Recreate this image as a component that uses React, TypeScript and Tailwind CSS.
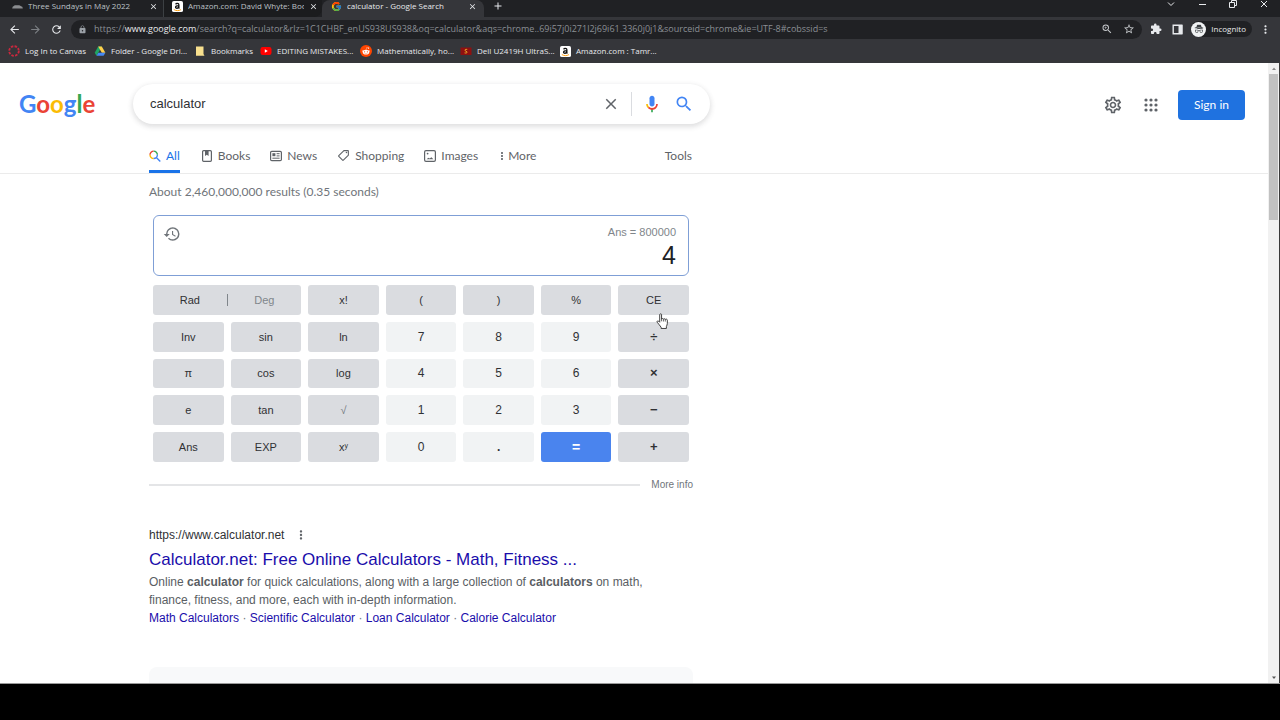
import type { ReactNode } from "react";
import { BsIncognito } from "react-icons/bs";
import { FaRedditAlien } from "react-icons/fa";
import { FcGoogle } from "react-icons/fc";
import {
  MdAdd,
  MdArrowBack,
  MdArrowForward,
  MdClose,
  MdExtension,
  MdHistory,
  MdLock,
  MdMoreVert,
  MdOutlineLocalOffer,
  MdOutlineSettings,
  MdRefresh,
  MdSearch,
  MdStarBorder,
  MdZoomIn,
} from "react-icons/md";

function AmazonIcon() {
  return (
    <svg viewBox="0 0 12 12" className="size-[11px] shrink-0" aria-hidden="true">
      <rect width="12" height="12" rx="2" fill="#fff" />
      <path
        d="M4 3.6C4.3 2.4 7.5 2.2 7.5 4v3.2c0 .5.3.7.6 1M7.4 5C5.400 5 3.900 5.300 3.900 6.700c0 1.700 2.900 1.600 3.500-.2"
        fill="none"
        stroke="#111"
        strokeWidth="1.400"
      />
      <path d="M2 9.300c2.400 1.600 5.400 1.600 7.800.1" fill="none" stroke="#f90" strokeWidth="1" />
    </svg>
  );
}

function CarIcon() {
  return (
    <svg viewBox="0 0 12 12" className="size-[11px] shrink-0" aria-hidden="true">
      <path d="M.5 6.500 3 4.500h5l3.500 2v1.800H.5z" fill="#8b8d90" />
      <path d="M.5 7.800h11v1H.5z" fill="#55575a" />
    </svg>
  );
}

function CanvasIcon() {
  return (
    <svg viewBox="0 0 12 12" className="size-3 shrink-0" aria-hidden="true">
      <circle cx="6" cy="6" r="4.800" fill="none" stroke="#c9283e" strokeWidth="1.800" strokeDasharray="2.500 1.270" />
    </svg>
  );
}

function DriveIcon() {
  return (
    <svg viewBox="0 0 12 12" className="size-3 shrink-0" aria-hidden="true">
      <path d="M4.200 1.500h3.600L6 4.700 2.500 10.800.7 7.700z" fill="#1fa463" />
      <path d="M4.200 1.500h3.600l3.600 6.200H7.800z" fill="#ffd04b" />
      <path d="M4.300 7.700h7.100l-1.800 3.100H2.500z" fill="#4688f4" />
    </svg>
  );
}

function NoteIcon() {
  return (
    <svg viewBox="0 0 12 12" className="size-3 shrink-0" aria-hidden="true">
      <path d="M2 1.500h7.500v7.500l1 1.800H2z" fill="#f8e08e" />
    </svg>
  );
}

function YouTubeIcon() {
  return (
    <svg viewBox="0 0 12 12" className="size-3 shrink-0" aria-hidden="true">
      <rect x=".5" y="2" width="11" height="8" rx="2.200" fill="#f00" />
      <path d="M4.800 4.200v3.600L7.800 6z" fill="#fff" />
    </svg>
  );
}

function RedditIcon() {
  return (
    <span className="flex size-3 shrink-0 items-center justify-center rounded-full bg-[#ff4500] text-white">
      <FaRedditAlien className="size-2" />
    </span>
  );
}

function RedSiteIcon() {
  return (
    <svg viewBox="0 0 12 12" className="size-3 shrink-0" aria-hidden="true">
      <rect x=".5" y="2.500" width="11" height="7.500" fill="#8f1010" />
      <path d="M7.200 4.500c-2.400-.6-3 1-1.400 1.600 2 .6 1.600 2.400-1.200 1.800" fill="none" stroke="#f0b429" strokeWidth="1" />
    </svg>
  );
}

function MicIcon() {
  return (
    <svg viewBox="0 0 24 24" className="size-5" aria-hidden="true">
      <path fill="#4285f4" d="m12 15c1.660 0 3-1.310 3-2.970v-7.020c0-1.660-1.340-3.010-3-3.010s-3 1.340-3 3.010v7.020c0 1.660 1.340 2.970 3 2.970z" />
      <path fill="#34a853" d="m11 18.080h2v3.920h-2z" />
      <path fill="#fbbc05" d="m7.050 16.870c-1.270-1.330-2.050-2.830-2.050-4.870h2c0 1.450.56 2.420 1.470 3.380v.32l-1.150 1.180z" />
      <path fill="#ea4335" d="m12 16.930a4.970 5.250 0 0 1-3.540-1.550l-1.410 1.490c1.260 1.340 3.020 2.130 4.950 2.130 3.870 0 6.990-2.920 6.990-7h-1.990c0 2.920-2.240 4.930-5 4.930z" />
    </svg>
  );
}

function ColorSearchIcon() {
  return (
    <svg viewBox="0 0 12 12" className="size-3" fill="none" strokeWidth="1.400" aria-hidden="true">
      <path d="M1 4.800A3.700 3.700 0 0 1 4.700 1.100" stroke="#ea4335" />
      <path d="M4.700 1.100A3.700 3.700 0 0 1 8.400 4.800" stroke="#34a853" />
      <path d="M1 4.800A3.700 3.700 0 0 0 4.700 8.500" stroke="#fbbc05" />
      <path d="M8.400 4.800A3.700 3.700 0 0 1 4.700 8.500M7.300 7.400 11.300 11.400" stroke="#4285f4" />
    </svg>
  );
}

function BookIcon() {
  return (
    <svg viewBox="0 0 12 12" className="size-3" fill="none" aria-hidden="true">
      <rect x="1.600" y=".7" width="8.800" height="10.600" rx="1" stroke="#5f6368" strokeWidth="1.200" />
      <path d="M4 1h3.600v5L5.800 4.800 4 6z" fill="#5f6368" />
    </svg>
  );
}

function NewsIcon() {
  return (
    <svg viewBox="0 0 12 12" className="size-3" fill="none" stroke="#5f6368" aria-hidden="true">
      <rect x=".6" y="1.400" width="10.800" height="9.200" rx="1.200" strokeWidth="1.200" />
      <path d="M2.400 3.200h3v3h-3z" fill="#5f6368" stroke="none" />
      <path d="M6.600 3.700h3M6.600 5.900h3M2.400 8.200h7.200" strokeWidth="1" />
    </svg>
  );
}

function ImagesIcon() {
  return (
    <svg viewBox="0 0 12 12" className="size-3" fill="none" aria-hidden="true">
      <rect x=".6" y=".6" width="10.800" height="10.800" rx="1.400" stroke="#5f6368" strokeWidth="1.200" />
      <path d="M2.600 9.200 4.400 7.800l1.300.8L7.400 7.200 9.400 9.200z" fill="#5f6368" />
      <circle cx="3.600" cy="3.600" r=".9" fill="#5f6368" />
    </svg>
  );
}

function AppsIcon() {
  return (
    <svg viewBox="0 0 14 14" className="size-[14px]" fill="#5f6368" aria-hidden="true">
      {[2, 7, 12].map((y) => [2, 7, 12].map((x) => <circle key={`${x}-${y}`} cx={x} cy={y} r="1.600" />))}
    </svg>
  );
}

function HandCursor() {
  return (
    <svg viewBox="0 0 14 18" className="pointer-events-none absolute top-[28px] left-[38px] z-10 h-[17px] w-[13px]" aria-hidden="true">
      <path
        d="M4 1.500c0-1 2-1 2 0v5c0-1 2-1 2 .2 0-1 2-.9 2 .3 0-.9 2.200-.9 2.200.6v3.600c0 1.400-.7 2-1 3.200V16.500H5.500v-1.300C4.500 13.500 2.500 11.500 1.300 9.800c-.7-1.200.7-2 1.600-1.100L4 9.800z"
        fill="#fff"
        stroke="#333"
        strokeWidth="1"
      />
      <path d="M6 6.500v2.300M8 7v2M10 7.200v1.900" stroke="#333" strokeWidth=".8" />
    </svg>
  );
}

function Tab({ icon, title, className }: { icon: ReactNode; title: string; className: string }) {
  return (
    <div className={`flex h-full items-start ${className}`}>
      <div className="flex h-3 min-w-0 flex-1 items-center gap-[5px]">
        {icon}
        <span className="min-w-0 flex-1 overflow-hidden whitespace-nowrap">{title}</span>
        <button aria-label={`Close ${title}`} className="text-[#e8eaed]">
          <MdClose className="size-[9px]" />
        </button>
      </div>
    </div>
  );
}

const bookmarks = [
  { label: "Log In to Canvas", icon: <CanvasIcon />, width: "w-[86px]" },
  { label: "Folder - Google Dri...", icon: <DriveIcon />, width: "w-[100px]" },
  { label: "Bookmarks", icon: <NoteIcon />, width: "w-[66px]" },
  { label: "EDITING MISTAKES...", icon: <YouTubeIcon />, width: "w-[100px]" },
  { label: "Mathematically, ho...", icon: <RedditIcon />, width: "w-[100px]" },
  { label: "Dell U2419H UltraS...", icon: <RedSiteIcon />, width: "w-[100px]" },
  { label: "Amazon.com : Tamr...", icon: <AmazonIcon />, width: "w-[100px]" },
];

function BrowserChrome() {
  return (
    <header className="shrink-0 bg-[#35363a] font-['Open_Sans','Noto_Sans',sans-serif] text-[8px] text-[#e8eaed]">
      <div className="flex h-[17px] items-start bg-[#202124] leading-3 text-[#bdc1c6]">
        <Tab icon={<CarIcon />} title="Three Sundays in May 2022" className="w-[164px] border-r border-[#3c4043] pr-[5px] pl-3" />
        <Tab icon={<AmazonIcon />} title="Amazon.com: David Whyte: Boo" className="w-[158px] rounded-br-lg bg-[#1b1c1e] pr-1 pl-2" />
        <Tab icon={<FcGoogle className="size-[11px]" />} title="calculator - Google Search" className="w-[162px] rounded-t-lg bg-[#35363a] pr-[7px] pl-[9px] text-[#e8eaed]" />
        <button aria-label="New tab" className="ml-2 flex h-3 items-center text-[#e8eaed]">
          <MdAdd className="size-3" />
        </button>
        <div className="ml-auto flex h-2 items-center gap-[21px] pr-[11px] text-[#e8eaed]">
          <button aria-label="Search tabs">
            <svg viewBox="0 0 10 10" className="size-[10px]" fill="none" stroke="currentColor" aria-hidden="true">
              <path d="M2 3.500l3 3 3-3" />
            </svg>
          </button>
          <button aria-label="Minimize">
            <svg viewBox="0 0 10 10" className="size-[10px]" fill="none" stroke="currentColor" aria-hidden="true">
              <path d="M2 5.500h7" />
            </svg>
          </button>
          <button aria-label="Restore">
            <svg viewBox="0 0 10 10" className="size-[10px]" fill="none" stroke="currentColor" aria-hidden="true">
              <path d="M1.500 3.500h5v5h-5zM3.500 3V1.500h5v5H7" />
            </svg>
          </button>
          <button aria-label="Close window">
            <svg viewBox="0 0 10 10" className="size-[10px]" fill="none" stroke="currentColor" aria-hidden="true">
              <path d="M2 2l6 6M8 2 2 8" />
            </svg>
          </button>
        </div>
      </div>

      <div className="flex h-6 items-center pl-2">
        <div className="flex items-center gap-2">
          <button aria-label="Back">
            <MdArrowBack className="size-[13px]" />
          </button>
          <button aria-label="Forward" className="text-[#7d8084]">
            <MdArrowForward className="size-[13px]" />
          </button>
          <button aria-label="Reload">
            <MdRefresh className="size-[13px]" />
          </button>
        </div>
        <div className="ml-2 flex h-[19px] min-w-0 flex-1 items-center rounded-full bg-[#202124] px-[7px]">
          <MdLock className="size-[9px] shrink-0 text-[#9aa0a6]" />
          <div
            role="textbox"
            aria-label="Address"
            contentEditable
            suppressContentEditableWarning
            className="ml-[7px] min-w-0 flex-1 overflow-hidden text-[9px] leading-4 whitespace-nowrap text-[#8b8f94] outline-none"
          >
            https://<span className="text-[#e8eaed]">www.google.com</span>
            /search?q=calculator&amp;rlz=1C1CHBF_enUS938US938&amp;oq=calculator&amp;aqs=chrome..69i57j0i271l2j69i61.3360j0j1&amp;sourceid=chrome&amp;ie=UTF-8#cobssid=s
          </div>
          <div className="flex items-center gap-[10px] text-[#c4c7ca]">
            <button aria-label="Zoom">
              <MdZoomIn className="size-3" />
            </button>
            <button aria-label="Bookmark this page">
              <MdStarBorder className="size-3" />
            </button>
          </div>
        </div>
        <div className="flex items-center pr-2 pl-2">
          <button aria-label="Extensions">
            <MdExtension className="size-3" />
          </button>
          <button aria-label="Side panel" className="ml-[10px]">
            <svg viewBox="0 0 11 11" className="size-[11px]" aria-hidden="true">
              <path d="M1.200 1.200h8.600v8.600H1.200z" fill="none" stroke="currentColor" strokeWidth="1.400" />
              <path d="M6.500 1h4v9h-4z" fill="currentColor" />
            </svg>
          </button>
          <button className="ml-2 flex h-4 items-center gap-[5px] rounded-full bg-[#202124] pr-[6px] leading-4">
            <span className="flex size-[15px] items-center justify-center rounded-full bg-[#f1f3f4] text-[#3c4043]">
              <BsIncognito className="size-[10px]" />
            </span>
            Incognito
          </button>
          <button aria-label="Browser menu" className="ml-[7px]">
            <MdMoreVert className="size-[13px]" />
          </button>
        </div>
      </div>

      <nav aria-label="Bookmarks" className="flex h-[22px] items-start pt-1 pl-2">
        {bookmarks.map((b) => (
          <a key={b.label} href="#" className={`flex h-3 shrink-0 items-center gap-[5px] whitespace-nowrap ${b.width}`}>
            {b.icon}
            {b.label}
          </a>
        ))}
      </nav>
    </header>
  );
}

function SearchHeader() {
  return (
    <div className="flex items-center pt-[21px] pr-[23px] pl-[19px]">
      <a href="#" aria-label="Google" className="w-[114px] font-['Lato',sans-serif] text-[24px] leading-10 font-bold">
        <span className="text-[#4285f4]">G</span>
        <span className="text-[#ea4335]">o</span>
        <span className="text-[#fbbc05]">o</span>
        <span className="text-[#4285f4]">g</span>
        <span className="text-[#34a853]">l</span>
        <span className="text-[#ea4335]">e</span>
      </a>
      <form role="search" className="flex h-10 w-[577px] items-center rounded-full bg-white pr-4 pl-[17px] shadow-[0_2px_5px_1px_rgba(64,60,67,0.16)]">
        <input
          aria-label="Search"
          defaultValue="calculator"
          className="min-w-0 flex-1 bg-transparent font-['Liberation_Sans',Arial,sans-serif] text-[13px] text-[#303134] outline-none"
        />
        <button type="button" aria-label="Clear" className="text-[#5f6368]">
          <MdClose className="size-[18px]" />
        </button>
        <span className="ml-[11px] h-6 w-px bg-[#dadce0]" />
        <button type="button" aria-label="Search by voice" className="ml-[10px]">
          <MicIcon />
        </button>
        <button type="button" aria-label="Submit search" className="ml-3 text-[#4285f4]">
          <MdSearch className="size-5" />
        </button>
      </form>
      <div className="mt-[2px] ml-auto flex items-center">
        <button aria-label="Settings" className="text-[#5f6368]">
          <MdOutlineSettings className="size-5" />
        </button>
        <button aria-label="Google apps" className="ml-[21px]">
          <AppsIcon />
        </button>
        <a
          href="#"
          className="ml-5 flex h-[30px] w-[67px] items-center justify-center rounded-[4px] bg-[#1f72e0] font-['Lato',sans-serif] text-[12px] text-white"
        >
          Sign in
        </a>
      </div>
    </div>
  );
}

function NavTabs() {
  const item = "flex items-center gap-[5px]";
  return (
    <nav
      aria-label="Search filters"
      className="mt-[10px] border-b border-[#ebebeb] pl-[149px] font-['Lato',sans-serif] text-[12px] leading-4 text-[#5f6368]"
    >
      <div className="flex h-[39px] w-[543px] items-stretch pt-1">
        <a href="#" aria-current="page" className={`${item} mr-[21px] border-b-3 border-[#1a73e8] pt-[3px] text-[#1a73e8]`}>
          <ColorSearchIcon />
          All
        </a>
        <a href="#" className={`${item} mr-5`}>
          <BookIcon />
          Books
        </a>
        <a href="#" className={`${item} mr-5`}>
          <NewsIcon />
          News
        </a>
        <a href="#" className={`${item} mr-5`}>
          <MdOutlineLocalOffer className="size-[13px] -scale-x-100" />
          Shopping
        </a>
        <a href="#" className={`${item} mr-[18px]`}>
          <ImagesIcon />
          Images
        </a>
        <button className="flex items-center">
          <MdMoreVert className="size-3" />
          More
        </button>
        <button className="ml-auto">Tools</button>
      </div>
    </nav>
  );
}

type Key = { label: ReactNode; name: string; kind?: "digit" | "equals" | "operator"; cursor?: boolean };

const keys: Key[] = [
  { label: "x!", name: "factorial" },
  { label: "(", name: "left parenthesis" },
  { label: ")", name: "right parenthesis" },
  { label: "%", name: "percentage" },
  { label: "CE", name: "clear entry", cursor: true },
  { label: "Inv", name: "inverse" },
  { label: "sin", name: "sine" },
  { label: "ln", name: "natural logarithm" },
  { label: "7", name: "7", kind: "digit" },
  { label: "8", name: "8", kind: "digit" },
  { label: "9", name: "9", kind: "digit" },
  { label: "÷", name: "divide", kind: "operator" },
  { label: "π", name: "pi" },
  { label: "cos", name: "cosine" },
  { label: "log", name: "logarithm" },
  { label: "4", name: "4", kind: "digit" },
  { label: "5", name: "5", kind: "digit" },
  { label: "6", name: "6", kind: "digit" },
  { label: "×", name: "multiply", kind: "operator" },
  { label: "e", name: "euler's number" },
  { label: "tan", name: "tangent" },
  { label: <span className="text-[#70757a]">√</span>, name: "square root" },
  { label: "1", name: "1", kind: "digit" },
  { label: "2", name: "2", kind: "digit" },
  { label: "3", name: "3", kind: "digit" },
  { label: "−", name: "minus", kind: "operator" },
  { label: "Ans", name: "answer" },
  { label: "EXP", name: "exponential" },
  { label: <>x<sup className="text-[7px]">y</sup></>, name: "x to the power of y" },
  { label: "0", name: "0", kind: "digit" },
  { label: <b>.</b>, name: "point", kind: "digit" },
  { label: "=", name: "equals", kind: "equals" },
  { label: "+", name: "plus", kind: "operator" },
];

const keyStyle = {
  function: "bg-[#dadce0]",
  operator: "bg-[#dadce0] text-[13px] font-bold",
  digit: "bg-[#f1f3f4] text-[12px]",
  equals: "bg-[#4a84ee] text-[14px] font-bold text-white",
};

function Calculator() {
  return (
    <section aria-label="Calculator" className="mt-[15px] ml-1 w-[536px] text-[#303134]">
      <div className="flex h-[61px] justify-between rounded-[6px] border border-[#7f9fd6] pt-[9px] pr-3 pl-[9px]">
        <button aria-label="History" className="self-start text-[#70757a]">
          <MdHistory className="size-[18px]" />
        </button>
        <div className="text-right">
          <div className="text-[11px] leading-[14px] text-[#80868b]">Ans = 800000</div>
          <output className="block text-[25px] leading-8 text-[#202124]">4</output>
        </div>
      </div>
      <div className="mt-[9px] grid h-[177px] grid-cols-7 grid-rows-5 gap-[7px] text-[11px] leading-4">
        <div className="col-span-2 flex items-center rounded-[3px] bg-[#dadce0]">
          <button className="flex-1">Rad</button>
          <span className="h-3 w-px bg-[#80868b]" />
          <button className="flex-1 text-[#80868b]">Deg</button>
        </div>
        {keys.map((k) => (
          <button key={k.name} aria-label={k.name} className={`relative rounded-[3px] ${keyStyle[k.kind ?? "function"]}`}>
            {k.label}
            {k.cursor && <HandCursor />}
          </button>
        ))}
      </div>
    </section>
  );
}

function ResultLinks() {
  const links = ["Math Calculators", "Scientific Calculator", "Loan Calculator", "Calorie Calculator"];
  return (
    <p className="text-[#1a0dab]">
      {links.map((l, i) => (
        <span key={l}>
          {i > 0 && <span className="text-[#70757a]"> · </span>}
          <a href="#">{l}</a>
        </span>
      ))}
    </p>
  );
}

function Scrollbar() {
  return (
    <div aria-hidden="true" className="flex w-3 shrink-0 flex-col items-center border-r border-[#3a3a3a] bg-[#f1f1f1]">
      <svg viewBox="0 0 10 11" className="h-[11px] w-[10px]">
        <path d="M3 7l2-2.500L7 7z" fill="#888" />
      </svg>
      <div className="h-[146px] w-[9px] bg-[#c1c1c1]" />
      <svg viewBox="0 0 10 11" className="mt-auto h-[11px] w-[10px]">
        <path d="M3 4.500h4L5 7z" fill="#555" />
      </svg>
    </div>
  );
}

export default function App() {
  return (
    <div className="flex h-screen flex-col bg-black">
      <BrowserChrome />
      <div className="flex min-h-0 flex-1 bg-white">
        <main className="min-w-0 flex-1 overflow-hidden font-['Liberation_Sans',Arial,sans-serif]">
          <SearchHeader />
          <NavTabs />
          <div className="ml-[149px] w-[544px]">
            <p className="mt-[10px] font-['Lato',sans-serif] text-[12px] leading-4 text-[#70757a]">
              About 2,460,000,000 results (0.35 seconds)
            </p>
            <Calculator />
            <div className="mt-[15px] flex items-center gap-[11px] text-[10px] leading-4 text-[#70757a]">
              <span className="h-[2px] flex-1 bg-[#e4e5e7]" />
              <a href="#">More info</a>
            </div>
            <article className="mt-[33px] w-[500px] text-[12px] leading-[18px] text-[#5a5e63]">
              <div className="flex items-center gap-[10px] text-[#303134]">
                <cite className="not-italic">https://www.calculator.net</cite>
                <button aria-label="About this result" className="text-[#5f6368]">
                  <MdMoreVert className="size-[14px]" />
                </button>
              </div>
              <h3 className="mt-1 text-[17px] leading-6 text-[#1a0dab]">
                <a href="#">Calculator.net: Free Online Calculators - Math, Fitness ...</a>
              </h3>
              <p className="mt-[1px]">
                Online <b>calculator</b> for quick calculations, along with a large collection of <b>calculators</b> on math,
                finance, fitness, and more, each with in-depth information.
              </p>
              <ResultLinks />
            </article>
            <div className="mt-10 h-10 rounded-lg bg-[#f8f9fa]" />
          </div>
        </main>
        <Scrollbar />
      </div>
      <footer className="h-[37px] shrink-0 border-t border-[#9a9a9a] bg-black" />
    </div>
  );
}
